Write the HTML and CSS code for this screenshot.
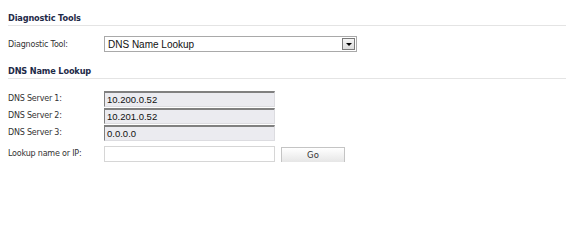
FILE: index.html
```html
<!DOCTYPE html>
<html>
<head>
<meta charset="utf-8">
<link rel="stylesheet" href="styles.css">
</head>
<body>
<div class="page">
  <div class="section-title">Diagnostic Tools</div>
  <div class="row row-select">
    <div class="label">Diagnostic Tool:</div>
    <div class="select">
      <span class="select-text">DNS Name Lookup</span>
      <span class="select-btn"><span class="arrow"></span></span>
    </div>
  </div>
  <div class="section-title second">DNS Name Lookup</div>
  <div class="fields">
    <div class="row">
      <div class="label">DNS Server 1:</div>
      <div class="input ro">10.200.0.52</div>
    </div>
    <div class="row">
      <div class="label">DNS Server 2:</div>
      <div class="input ro">10.201.0.52</div>
    </div>
    <div class="row">
      <div class="label">DNS Server 3:</div>
      <div class="input ro">0.0.0.0</div>
    </div>
    <div class="row row-lookup">
      <div class="label">Lookup name or IP:</div>
      <div class="input blank"></div>
      <button class="go">Go</button>
    </div>
  </div>
</div>
</body>
</html>
```
FILE: styles.css
```css
html, body {
  margin: 0;
  padding: 0;
  background: #ffffff;
}
.page {
  padding: 12px 10px 0 8px;
  font-family: "Liberation Sans", Arial, sans-serif;
  color: #222;
}
.section-title {
  font-family: "DejaVu Sans", sans-serif;
  font-weight: bold;
  font-size: 8.2px;
  letter-spacing: -0.15px;
  color: #1e2a48;
  height: 13px;
  line-height: 12px;
  border-bottom: 1px solid #e4e4e4;
}
.section-title.second {
  margin-top: 13px;
}
.row {
  display: flex;
  align-items: center;
  height: 17px;
}
.row-select {
  margin-top: 10px;
  height: 16px;
}
.label {
  width: 96px;
  flex: none;
  font-family: "DejaVu Sans", sans-serif;
  font-size: 8px;
  letter-spacing: -0.2px;
  color: #333;
}
.select {
  width: 251px;
  height: 14px;
  border: 1px solid #a9a9a9;
  display: flex;
  align-items: center;
  justify-content: space-between;
  background: #fff;
}
.select-text {
  font-size: 10px;
  color: #111;
  padding-left: 3px;
}
.select-btn {
  width: 13px;
  height: 12px;
  margin-right: 1px;
  border: 1px solid #7a7a7a;
  background: linear-gradient(#f4f4f4, #dcdcdc);
  box-sizing: border-box;
  display: flex;
  align-items: center;
  justify-content: center;
}
.arrow {
  width: 0;
  height: 0;
  border-left: 3px solid transparent;
  border-right: 3px solid transparent;
  border-top: 3px solid #000;
}
.fields {
  margin-top: 11px;
}
.input {
  width: 171px;
  height: 16px;
  box-sizing: border-box;
  font-size: 9.5px;
  line-height: 14px;
  padding-left: 2px;
  color: #111;
}
.input.ro {
  background: #ebebf0;
  border-top: 2px solid #808080;
  border-left: 1px solid #808080;
  border-right: 1px solid #dcdce0;
  border-bottom: 1px solid #dcdce0;
}
.row-lookup {
  margin-top: 4px;
  height: 17px;
}
.input.blank {
  background: #fff;
  border: 1px solid #d6d6d6;
}
.go {
  margin-left: 6px;
  width: 64px;
  height: 16px;
  margin-top: 2px;
  padding: 0;
  border: 1px solid #c4c4c4;
  background: linear-gradient(#ffffff, #e6e6e6);
  font-family: "DejaVu Sans", sans-serif;
  font-size: 8.5px;
  color: #333;
}
```
